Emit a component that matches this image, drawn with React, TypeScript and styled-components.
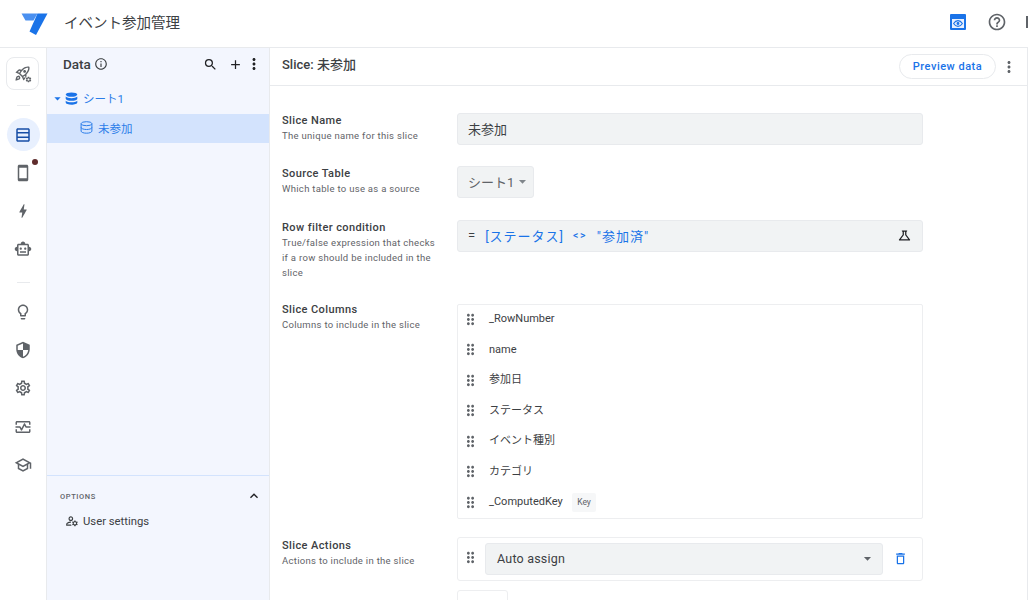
import React from "react";
import styled, { createGlobalStyle } from "styled-components";
import {
  MdAdd,
  MdArrowDropDown,
  MdBolt,
  MdDragIndicator,
  MdExpandLess,
  MdHelpOutline,
  MdInfoOutline,
  MdMoreVert,
  MdOutlineDelete,
  MdOutlineLightbulb,
  MdOutlineManageAccounts,
  MdOutlineMonitorHeart,
  MdOutlineRocketLaunch,
  MdOutlineSchool,
  MdOutlineScience,
  MdOutlineSettings,
  MdOutlineSmartToy,
  MdOutlineSmartphone,
  MdOutlineTableRows,
  MdSearch,
  MdSecurity,
  MdSettings,
} from "react-icons/md";

const GlobalStyle = createGlobalStyle`
  html, body {
    margin: 0;
    padding: 0;
    height: 100%;
    overflow: hidden;
    background: #fff;
  }
  body {
    font-family: Roboto, "Noto Sans CJK JP", sans-serif;
    color: #3c4043;
  }
`;

const Page = styled.div`
  width: 1028px;
  height: 600px;
  display: flex;
  flex-direction: column;
  overflow: hidden;
`;

const TopBar = styled.header`
  height: 47px;
  flex: none;
  display: flex;
  align-items: center;
  padding-left: 21px;
  border-bottom: 1px solid #e8eaed;
`;

const AppTitle = styled.div`
  margin-left: 16px;
  font-size: 14.5px;
  color: #3c4043;
  margin-top: -5px;
`;

const TopActions = styled.div`
  margin-left: auto;
  display: flex;
  align-items: center;
  margin-top: -3px;
`;

const PreviewToggle = styled.div`
  width: 16px;
  height: 16px;
  background: #1a73e8;
  border-radius: 1px;
  display: flex;
  align-items: center;
  justify-content: center;
`;

const PreviewFace = styled.div`
  width: 12px;
  height: 9px;
  margin-top: 3px;
  background: #e8f0fe;
  display: flex;
  align-items: center;
  justify-content: center;
`;

const HelpIcon = styled.div`
  margin-left: 21px;
  display: flex;
  color: #5f6368;
  font-size: 20px;
`;

const AvatarEdge = styled.div`
  margin-left: 19px;
  width: 2px;
  height: 12px;
  background: #5f6368;
`;

const Body = styled.div`
  flex: 1;
  min-height: 0;
  display: flex;
`;

const Rail = styled.nav`
  width: 46px;
  flex: none;
  padding-top: 9px;
  display: flex;
  flex-direction: column;
  align-items: center;
  border-right: 1px solid #e8eaed;
`;

const RocketBox = styled.div`
  width: 31px;
  height: 31px;
  margin-right: 1px;
  border: 1px solid #e8eaed;
  border-radius: 8px;
  display: flex;
  align-items: center;
  justify-content: center;
  position: relative;
  color: #5f6368;
  font-size: 17px;
`;

const RocketGear = styled.span`
  position: absolute;
  right: 6px;
  bottom: 6px;
  display: flex;
  font-size: 7px;
  background: #fff;
  border-radius: 50%;
`;

const RailRule = styled.div<{ $top: number; $bottom: number }>`
  width: 13px;
  height: 1px;
  margin: ${(p) => p.$top}px 0 ${(p) => p.$bottom}px;
  background: #e8eaed;
`;

const RailItem = styled.div<{ $active?: boolean; $dot?: boolean }>`
  width: 33px;
  height: 33px;
  margin-bottom: 5.3px;
  border-radius: 50%;
  display: flex;
  align-items: center;
  justify-content: center;
  position: relative;
  font-size: 18px;
  background: ${(p) => (p.$active ? "#e8f0fe" : "transparent")};
  color: ${(p) => (p.$active ? "#174ea6" : "#5f6368")};
  ${(p) =>
    p.$dot &&
    `&::after {
      content: "";
      position: absolute;
      top: 3px;
      right: 2px;
      width: 6px;
      height: 6px;
      border-radius: 50%;
      background: #5f2c2c;
    }`}
`;

const Sidebar = styled.aside`
  width: 222px;
  flex: none;
  background: #f3f6fe;
  border-right: 1px solid #e8eaed;
  display: flex;
  flex-direction: column;
`;

const SidebarHead = styled.div`
  height: 32px;
  margin-bottom: 2px;
  padding: 0 6px 0 16px;
  display: flex;
  align-items: center;
  color: #202124;
`;

const SidebarTitle = styled.div`
  font-size: 13.5px;
  font-weight: 500;
  display: flex;
  align-items: center;
  gap: 3px;
  color: #3c4043;
`;

const HeadIcons = styled.div`
  margin-left: auto;
  display: flex;
  align-items: center;
  font-size: 15px;
  & > svg:nth-child(2) {
    margin-left: 10px;
  }
  & > svg:nth-child(3) {
    margin-left: 2.5px;
    font-size: 18px;
  }
`;

const TreeRow = styled.div<{ $selected?: boolean }>`
  height: ${(p) => (p.$selected ? "29px" : "32px")};
  box-sizing: border-box;
  padding-bottom: ${(p) => (p.$selected ? "2px" : "0")};
  display: flex;
  align-items: center;
  font-size: 11.5px;
  color: #2b7de9;
  padding-left: ${(p) => (p.$selected ? "33px" : "3px")};
  background: ${(p) => (p.$selected ? "#d3e3fd" : "transparent")};
  gap: ${(p) => (p.$selected ? "5px" : "0")};
`;

const TreeCaret = styled.span`
  display: flex;
  font-size: 15px;
  color: #1a73e8;
`;

const TreeLabel = styled.span<{ $gap?: number }>`
  margin-left: ${(p) => p.$gap ?? 0}px;
`;

const Options = styled.div`
  margin-top: auto;
  height: 125px;
  flex: none;
  border-top: 1px solid #d3e3fd;
  padding: 14px 7px 0 13px;
  box-sizing: border-box;
`;

const OptionsHead = styled.div`
  display: flex;
  align-items: center;
  justify-content: space-between;
  height: 12px;
  font-size: 7.5px;
  font-weight: 500;
  letter-spacing: 0.6px;
  color: #5f6368;
  & > svg {
    font-size: 16px;
    color: #202124;
  }
`;

const OptionsRow = styled.div`
  margin-top: 12px;
  padding-left: 5px;
  display: flex;
  align-items: center;
  gap: 4px;
  font-size: 11.3px;
  color: #3c4043;
  & > svg {
    font-size: 14px;
  }
`;

const Main = styled.main`
  flex: 1;
  min-width: 0;
  display: flex;
  flex-direction: column;
  border-right: 1px solid #e8eaed;
`;

const MainHead = styled.div`
  height: 37px;
  flex: none;
  display: flex;
  align-items: center;
  padding: 0 9px 0 12px;
  border-bottom: 1px solid #e8eaed;
`;

const MainTitle = styled.div`
  font-size: 13px;
  font-weight: 500;
  color: #3c4043;
  margin-bottom: 7px;
`;

const PreviewButton = styled.button`
  margin-left: auto;
  width: 97px;
  height: 25px;
  padding: 0;
  background: #fff;
  border: 1px solid #e8eaed;
  border-radius: 13px;
  font-family: inherit;
  font-size: 11px;
  font-weight: 500;
  letter-spacing: 0.5px;
  color: #1a73e8;
`;

const MoreIcon = styled.div`
  margin-left: 4px;
  display: flex;
  font-size: 18px;
  color: #5f6368;
`;

const Form = styled.div`
  flex: 1;
  min-height: 0;
  overflow: hidden;
  padding: 27px 0 0 12px;
  display: flex;
  flex-direction: column;
`;

const FormRow = styled.section<{ $gap: number }>`
  display: grid;
  grid-template-columns: 175px 466px;
  margin-bottom: ${(p) => p.$gap}px;
`;

const FieldInfo = styled.div<{ $top?: number }>`
  margin-top: ${(p) => p.$top ?? 1}px;
`;

const FieldName = styled.div`
  font-size: 11px;
  font-weight: 500;
  line-height: 14px;
  letter-spacing: 0.4px;
  color: #3c4043;
`;

const FieldHint = styled.div`
  font-size: 9.5px;
  line-height: 15px;
  letter-spacing: 0.3px;
  width: 156px;
  color: #5f6368;
`;

const Field = styled.div<{ $fit?: boolean }>`
  height: 32px;
  width: ${(p) => (p.$fit ? "77px" : "auto")};
  box-sizing: border-box;
  padding: 0 10px 1px;
  background: #f1f3f4;
  border: 1px solid #e8eaed;
  border-radius: 3px;
  display: flex;
  align-items: center;
  white-space: nowrap;
  font-size: 13px;
  color: ${(p) => (p.$fit ? "#5f6368" : "#3c4043")};
`;

const FieldCaret = styled.span`
  display: flex;
  margin-left: auto;
  margin-right: -7px;
  font-size: 17px;
  color: #80868b;
`;

const Formula = styled.span`
  display: flex;
  align-items: center;
  color: #1a73e8;
  white-space: pre;
  letter-spacing: 1px;
`;

const FormulaEq = styled.span`
  color: #3c4043;
  margin-right: 9px;
`;

const FormulaOp = styled.span`
  font-size: 10.5px;
  font-weight: 500;
  letter-spacing: 1.5px;
  margin: 0 10px 0 9px;
`;

const FlaskIcon = styled.span`
  margin-left: auto;
  display: flex;
  font-size: 15px;
  color: #202124;
`;

const ColumnList = styled.div`
  height: 215px;
  box-sizing: border-box;
  border: 1px solid #edeef0;
  border-radius: 2px;
`;

const ColumnRow = styled.div`
  height: 30.5px;
  padding-left: 4px;
  display: flex;
  align-items: center;
  font-size: 11px;
  line-height: 14px;
  color: #3c4043;
  &:first-child {
    margin-top: -1px;
  }
`;

const Grip = styled.span`
  display: flex;
  font-size: 17px;
  color: #5f6368;
`;

const ColumnName = styled.span`
  margin-left: 10px;
`;

const KeyTag = styled.span`
  margin-left: 9px;
  padding: 0 5.5px;
  line-height: 19px;
  font-size: 8.5px;
  color: #5f6368;
  background: #f6f7f8;
  border-radius: 2px;
`;

const ActionBox = styled.div`
  height: 44px;
  box-sizing: border-box;
  border: 1px solid #edeef0;
  border-radius: 3px;
  padding: 5px 0 0 4px;
  display: flex;
  align-items: flex-start;
  & > ${Grip} {
    margin-top: 6px;
  }
`;

const ActionSelect = styled(Field)`
  width: 398px;
  margin-left: 6px;
  padding-left: 11px;
  font-size: 12.5px;
  letter-spacing: 0.2px;
  & > ${FieldCaret} {
    margin-right: -4px;
    margin-left: auto;
    color: #5f6368;
  }
`;

const TrashIcon = styled.span`
  display: flex;
  margin: 8px 0 0 10px;
  font-size: 15px;
  color: #1a73e8;
`;

const AddBox = styled.div`
  width: 51px;
  height: 32px;
  grid-column: 2;
  box-sizing: border-box;
  border: 1px solid #edeef0;
  border-radius: 3px;
`;

const Logo = () => (
  <svg width="27" height="24" viewBox="0 0 27 24">
    <path d="M0.5 1.5H16.5L12.5 8.5H4.5Z" fill="#4a90f0" />
    <path d="M16.5 1.5H26.5L15 23L8.5 19.5Z" fill="#1a73e8" />
  </svg>
);

const EyeMark = () => (
  <svg width="10" height="7" viewBox="0 0 10 7" fill="none" stroke="#1a73e8" strokeWidth="1.1">
    <path d="M.6 3.5C2 1.3 3.4.6 5 .6s3 .7 4.4 2.9C8 5.7 6.6 6.4 5 6.4S2 5.7.6 3.5z" />
    <circle cx="5" cy="3.5" r=".9" fill="#1a73e8" />
  </svg>
);

const DbFilled = () => (
  <svg width="13" height="13" viewBox="0 0 13 13" fill="#1a73e8">
    <ellipse cx="6.5" cy="2.6" rx="5.8" ry="2.2" />
    <path d="M.7 4.6c1.2 1.2 3.4 1.6 5.8 1.6s4.6-.4 5.8-1.6v2.1c0 1.2-2.6 2.1-5.8 2.1S.7 7.9.7 6.7z" />
    <path d="M.7 8.7c1.2 1.2 3.4 1.6 5.8 1.6s4.6-.4 5.8-1.6v1.9c0 1.3-2.6 2.2-5.8 2.2S.7 11.9.7 10.6z" />
  </svg>
);

const DbOutline = () => (
  <svg width="13" height="13" viewBox="0 0 13 13" fill="none" stroke="#2b7de9" strokeWidth="1">
    <ellipse cx="6.5" cy="2.7" rx="5.4" ry="2" />
    <path d="M1.1 2.7v7.4c0 1.2 2.4 2.1 5.4 2.1s5.4-.9 5.4-2.1V2.7" />
    <path d="M1.1 6.4c0 1.2 2.4 2.1 5.4 2.1s5.4-.9 5.4-2.1" />
  </svg>
);

const columns = ["_RowNumber", "name", "参加日", "ステータス", "イベント種別", "カテゴリ"];

export default function App() {
  return (
    <Page>
      <GlobalStyle />
      <TopBar>
        <Logo />
        <AppTitle>イベント参加管理</AppTitle>
        <TopActions>
          <PreviewToggle>
            <PreviewFace>
              <EyeMark />
            </PreviewFace>
          </PreviewToggle>
          <HelpIcon>
            <MdHelpOutline />
          </HelpIcon>
          <AvatarEdge />
        </TopActions>
      </TopBar>
      <Body>
        <Rail>
          <RocketBox>
            <MdOutlineRocketLaunch />
            <RocketGear>
              <MdSettings />
            </RocketGear>
          </RocketBox>
          <RailRule $top={15} $bottom={12} />
          <RailItem $active>
            <MdOutlineTableRows />
          </RailItem>
          <RailItem $dot>
            <MdOutlineSmartphone />
          </RailItem>
          <RailItem>
            <MdBolt />
          </RailItem>
          <RailItem>
            <MdOutlineSmartToy />
          </RailItem>
          <RailRule $top={11} $bottom={12} />
          <RailItem>
            <MdOutlineLightbulb />
          </RailItem>
          <RailItem>
            <MdSecurity />
          </RailItem>
          <RailItem>
            <MdOutlineSettings />
          </RailItem>
          <RailItem>
            <MdOutlineMonitorHeart />
          </RailItem>
          <RailItem>
            <MdOutlineSchool />
          </RailItem>
        </Rail>
        <Sidebar>
          <SidebarHead>
            <SidebarTitle>
              Data <MdInfoOutline size={14} />
            </SidebarTitle>
            <HeadIcons>
              <MdSearch />
              <MdAdd />
              <MdMoreVert />
            </HeadIcons>
          </SidebarHead>
          <TreeRow>
            <TreeCaret>
              <MdArrowDropDown />
            </TreeCaret>
            <DbFilled />
            <TreeLabel $gap={5}>シート1</TreeLabel>
          </TreeRow>
          <TreeRow $selected>
            <DbOutline />
            <TreeLabel>未参加</TreeLabel>
          </TreeRow>
          <Options>
            <OptionsHead>
              OPTIONS
              <MdExpandLess />
            </OptionsHead>
            <OptionsRow>
              <MdOutlineManageAccounts />
              User settings
            </OptionsRow>
          </Options>
        </Sidebar>
        <Main>
          <MainHead>
            <MainTitle>Slice: 未参加</MainTitle>
            <PreviewButton>Preview data</PreviewButton>
            <MoreIcon>
              <MdMoreVert />
            </MoreIcon>
          </MainHead>
          <Form>
            <FormRow $gap={21}>
              <FieldInfo>
                <FieldName>Slice Name</FieldName>
                <FieldHint>The unique name for this slice</FieldHint>
              </FieldInfo>
              <Field>未参加</Field>
            </FormRow>
            <FormRow $gap={22}>
              <FieldInfo>
                <FieldName>Source Table</FieldName>
                <FieldHint>Which table to use as a source</FieldHint>
              </FieldInfo>
              <Field $fit>
                シート1
                <FieldCaret>
                  <MdArrowDropDown />
                </FieldCaret>
              </Field>
            </FormRow>
            <FormRow $gap={24}>
              <FieldInfo>
                <FieldName>Row filter condition</FieldName>
                <FieldHint>
                  True/false expression that checks if a row should be included in the slice
                </FieldHint>
              </FieldInfo>
              <Field>
                <Formula>
                  <FormulaEq>=</FormulaEq>
                  [ステータス]
                  <FormulaOp>&lt;&gt;</FormulaOp>
                  "参加済"
                </Formula>
                <FlaskIcon>
                  <MdOutlineScience />
                </FlaskIcon>
              </Field>
            </FormRow>
            <FormRow $gap={18}>
              <FieldInfo $top={-1}>
                <FieldName>Slice Columns</FieldName>
                <FieldHint>Columns to include in the slice</FieldHint>
              </FieldInfo>
              <ColumnList>
                {columns.map((name) => (
                  <ColumnRow key={name}>
                    <Grip>
                      <MdDragIndicator />
                    </Grip>
                    <ColumnName>{name}</ColumnName>
                  </ColumnRow>
                ))}
                <ColumnRow>
                  <Grip>
                    <MdDragIndicator />
                  </Grip>
                  <ColumnName>_ComputedKey</ColumnName>
                  <KeyTag>Key</KeyTag>
                </ColumnRow>
              </ColumnList>
            </FormRow>
            <FormRow $gap={9}>
              <FieldInfo $top={2}>
                <FieldName>Slice Actions</FieldName>
                <FieldHint>Actions to include in the slice</FieldHint>
              </FieldInfo>
              <ActionBox>
                <Grip>
                  <MdDragIndicator />
                </Grip>
                <ActionSelect>
                  Auto assign
                  <FieldCaret>
                    <MdArrowDropDown />
                  </FieldCaret>
                </ActionSelect>
                <TrashIcon>
                  <MdOutlineDelete />
                </TrashIcon>
              </ActionBox>
            </FormRow>
            <FormRow $gap={0}>
              <AddBox />
            </FormRow>
          </Form>
        </Main>
      </Body>
    </Page>
  );
}
